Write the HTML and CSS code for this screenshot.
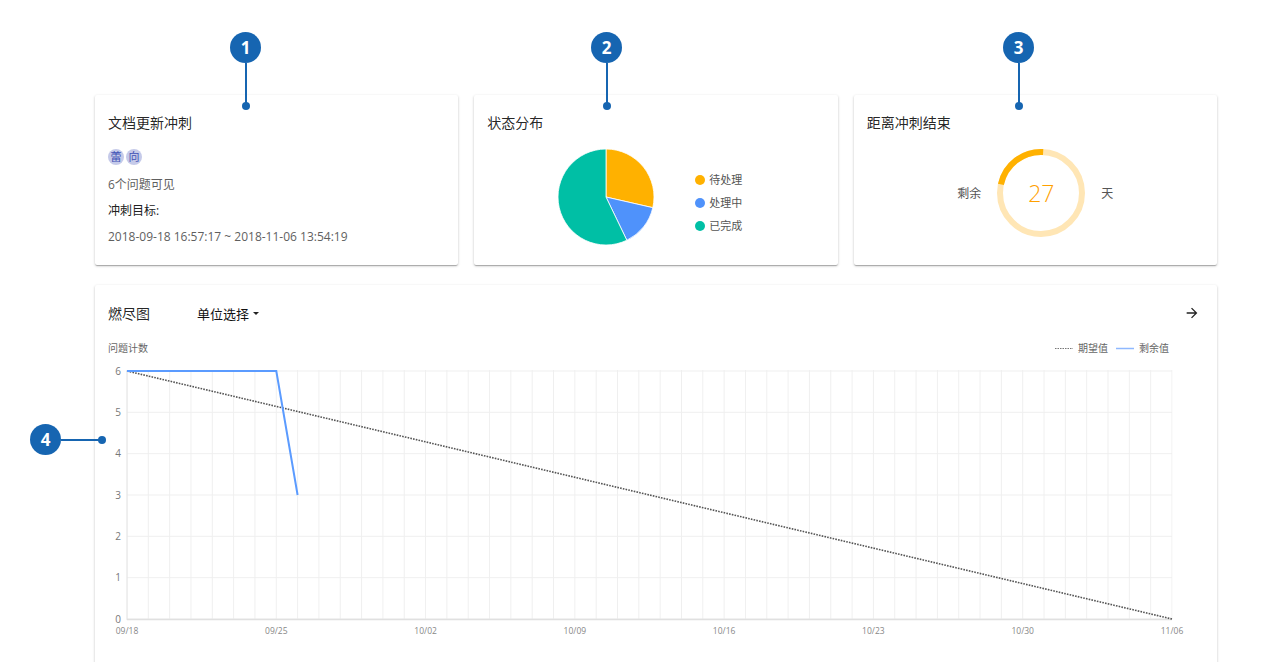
FILE: index.html
```html
<!DOCTYPE html>
<html lang="zh">
<head>
<meta charset="utf-8">
<title>冲刺</title>
<link rel="stylesheet" href="styles.css">
</head>
<body>
<div class="page">
  <div class="cards">
    <div class="card">
      <div class="card-title">文档更新冲刺</div>
      <div class="avatars">
        <span class="avatar">蕾</span>
        <span class="avatar">向</span>
      </div>
      <div class="meta gray">6个问题可见</div>
      <div class="meta dark">冲刺目标:</div>
      <div class="meta gray">2018-09-18 16:57:17 ~ 2018-11-06 13:54:19</div>
    </div>
    <div class="card">
      <div class="card-title">状态分布</div>
      <div class="pie-row">
        <svg class="pie" width="100" height="100" viewBox="0 0 100 100">
          <path d="M50,50 L50,2 A48,48 0 0,1 96.80,60.68 Z" fill="#ffb100" stroke="#fff" stroke-width="0.8"/>
          <path d="M50,50 L96.80,60.68 A48,48 0 0,1 70.83,93.25 Z" fill="#4f92fb" stroke="#fff" stroke-width="0.8"/>
          <path d="M50,50 L70.83,93.25 A48,48 0 1,1 50,2 Z" fill="#00bfa5" stroke="#fff" stroke-width="0.8"/>
        </svg>
        <ul class="legend">
          <li><span class="dot orange"></span>待处理</li>
          <li><span class="dot blue"></span>处理中</li>
          <li><span class="dot green"></span>已完成</li>
        </ul>
      </div>
    </div>
    <div class="card">
      <div class="card-title">距离冲刺结束</div>
      <div class="ring-row">
        <span class="ring-label">剩余</span>
        <div class="ring">
          <svg width="90" height="90" viewBox="0 0 90 90">
            <circle cx="45" cy="45" r="41" fill="none" stroke="#ffe6b5" stroke-width="6"/>
            <path d="M47.15,4.06 A41,41 0 0,0 4.90,36.48" fill="none" stroke="#ffb100" stroke-width="6"/>
          </svg>
          <span class="ring-num">27</span>
        </div>
        <span class="ring-label">天</span>
      </div>
    </div>
  </div>

  <div class="chart-card">
    <div class="chart-head">
      <span class="chart-title">燃尽图</span>
      <span class="unit-select">单位选择<span class="caret"></span></span>
      <svg class="go" width="16" height="16" viewBox="0 0 24 24"><path d="M12 4l-1.41 1.41L16.17 11H4v2h12.17l-5.58 5.59L12 20l8-8z" fill="#222"/></svg>
    </div>
    <svg class="chart" width="1122" height="310" viewBox="0 0 1122 310">
      <defs>
        <pattern id="vgrid" patternUnits="userSpaceOnUse" x="31.5" y="0" width="21.3265" height="310">
          <rect x="0" y="0" width="1" height="310" fill="#efefef"/>
        </pattern>
        <pattern id="hgrid" patternUnits="userSpaceOnUse" x="0" y="30.5" width="1122" height="41.3333">
          <rect x="0" y="0" width="1122" height="1" fill="#efefef"/>
        </pattern>
      </defs>
      <text class="axis-name" x="13" y="12">问题计数</text>
      <line x1="960" y1="8.5" x2="978" y2="8.5" stroke="#777" stroke-width="1" stroke-dasharray="1.5,1"/>
      <text class="legend-t" x="983" y="12">期望值</text>
      <line x1="1021" y1="8.5" x2="1039" y2="8.5" stroke="#8fb8ff" stroke-width="1.5"/>
      <text class="legend-t" x="1044" y="12">剩余值</text>

      <rect x="31.5" y="30" width="1046" height="249" fill="url(#vgrid)"/>
      <rect x="32" y="30" width="1045" height="250" fill="url(#hgrid)"/>
      <line x1="32" y1="30" x2="32" y2="280" stroke="#e4e4e4"/>
      <line x1="32" y1="279.5" x2="1077" y2="279.5" stroke="#e0e0e0" stroke-width="1.5"/>

      <g class="ytick">
        <text x="26" y="35">6</text>
        <text x="26" y="76">5</text>
        <text x="26" y="117">4</text>
        <text x="26" y="159">3</text>
        <text x="26" y="200">2</text>
        <text x="26" y="241">1</text>
        <text x="26" y="283">0</text>
      </g>
      <g class="xtick">
        <text x="32" y="294">09/18</text>
        <text x="181.3" y="294">09/25</text>
        <text x="330.6" y="294">10/02</text>
        <text x="479.9" y="294">10/09</text>
        <text x="629.1" y="294">10/16</text>
        <text x="778.4" y="294">10/23</text>
        <text x="927.7" y="294">10/30</text>
        <text x="1077" y="294">11/06</text>
      </g>

      <line x1="32" y1="31" x2="1077" y2="279" stroke="#555" stroke-width="1.6" stroke-dasharray="1.6,1.2"/>
      <polyline points="32,31 181.3,31 202.6,155" fill="none" stroke="#5b9bff" stroke-width="2"/>
    </svg>
  </div>

  <div class="mark mark1"><span class="badge">1</span><span class="vline"></span><span class="pin"></span></div>
  <div class="mark mark2"><span class="badge">2</span><span class="vline"></span><span class="pin"></span></div>
  <div class="mark mark3"><span class="badge">3</span><span class="vline"></span><span class="pin"></span></div>
  <div class="mark mark4 horiz"><span class="badge">4</span><span class="hline"></span><span class="pin"></span></div>
</div>
</body>
</html>
```

FILE: styles.css
```css
* { box-sizing: border-box; }
html, body {
  margin: 0;
  background: #fff;
  overflow: hidden;
}
body {
  font-family: "Open Sans", "Noto Sans CJK SC", sans-serif;
  color: rgba(0,0,0,0.87);
}
.page {
  position: relative;
  width: 1268px;
  padding: 95px 51px 0 95px;
}
.cards {
  display: grid;
  grid-template-columns: repeat(3, 1fr);
  grid-template-rows: 170px;
  column-gap: 16px;
}
.card, .chart-card {
  background: #fff;
  border-radius: 2px;
  box-shadow: 0 1px 3px rgba(0,0,0,0.2), 0 1px 1px rgba(0,0,0,0.14), 0 2px 1px -1px rgba(0,0,0,0.12);
}
.card {
  padding: 18px 13px 0 13px;
  display: flex;
  flex-direction: column;
}
.card-title {
  font-size: 14px;
  line-height: 20px;
  color: rgba(0,0,0,0.87);
}
.avatars {
  display: flex;
  gap: 2px;
  margin-top: 14px;
  height: 20px;
  align-items: center;
}
.avatar {
  width: 16px;
  height: 16px;
  border-radius: 50%;
  background: #c5cae9;
  color: #3f51b5;
  font-size: 11px;
  line-height: 16px;
  text-align: center;
}
.meta {
  font-size: 12px;
  line-height: 18px;
  margin-top: 8px;
}
.avatars + .meta { margin-top: 9px; }
.gray { color: #5f5f5f; }
.dark { color: #222; }

.pie-row {
  display: flex;
  align-items: center;
  margin-top: 14px;
  padding-left: 69px;
}
.pie { display: block; }
.legend {
  list-style: none;
  margin: 12px 0 0 39px;
  padding: 0;
  display: flex;
  flex-direction: column;
  gap: 7px;
  font-size: 11px;
  line-height: 16px;
  color: #555;
}
.legend li {
  display: flex;
  align-items: center;
  gap: 4px;
}
.dot {
  width: 10px;
  height: 10px;
  border-radius: 50%;
  display: inline-block;
}
.dot.orange { background: #ffb100; }
.dot.blue { background: #4f92fb; }
.dot.green { background: #00bfa5; }

.ring-row {
  display: flex;
  justify-content: center;
  align-items: center;
  gap: 15px;
  margin-top: 15px;
}
.ring-label {
  font-size: 12px;
  color: #555;
}
.ring {
  position: relative;
  width: 90px;
  height: 90px;
}
.ring svg { display: block; }
.ring-num {
  position: absolute;
  inset: 0;
  display: flex;
  align-items: center;
  justify-content: center;
  font-size: 23px;
  color: #ffa000;
  font-weight: 300;
}

.chart-card {
  margin-top: 20px;
  height: 400px;
  padding-top: 18px;
}
.chart-head {
  display: flex;
  align-items: center;
  height: 20px;
  padding: 0 17px 0 13px;
}
.chart-title {
  font-size: 14px;
  color: rgba(0,0,0,0.87);
}
.unit-select {
  margin-left: 47px;
  font-size: 13px;
  color: #111;
  display: flex;
  align-items: center;
}
.caret {
  display: inline-block;
  margin-left: 4px;
  width: 0;
  height: 0;
  border-left: 3px solid transparent;
  border-right: 3px solid transparent;
  border-top: 3px solid #222;
}
.go {
  margin-left: auto;
}
.chart {
  display: block;
  margin-top: 17px;
}
.chart text {
  font-family: "Open Sans", "Noto Sans CJK SC", sans-serif;
}
.axis-name, .legend-t {
  font-size: 10px;
  fill: #666;
}
.ytick text {
  font-size: 10px;
  fill: #777;
  text-anchor: end;
}
.xtick text {
  font-size: 8.5px;
  fill: #888;
  text-anchor: middle;
}

.mark {
  position: absolute;
  display: flex;
  flex-direction: column;
  align-items: center;
  width: 31px;
}
.mark1 { left: 230px; top: 32px; }
.mark2 { left: 591px; top: 32px; }
.mark3 { left: 1003px; top: 32px; }
.mark4 { left: 30px; top: 424px; flex-direction: row; width: auto; }
.badge {
  width: 31px;
  height: 31px;
  border-radius: 50%;
  background: #1665b1;
  color: #fff;
  font-weight: 700;
  font-size: 17px;
  line-height: 31px;
  text-align: center;
  font-family: "Open Sans", sans-serif;
  flex: none;
}
.vline {
  width: 2px;
  height: 42px;
  background: #1665b1;
}
.hline {
  height: 2px;
  width: 40px;
  background: #1665b1;
}
.pin {
  width: 8px;
  height: 8px;
  border-radius: 50%;
  background: #1665b1;
  margin-top: -3px;
}
.horiz .pin {
  margin-top: 0;
  margin-left: -3px;
}
```
